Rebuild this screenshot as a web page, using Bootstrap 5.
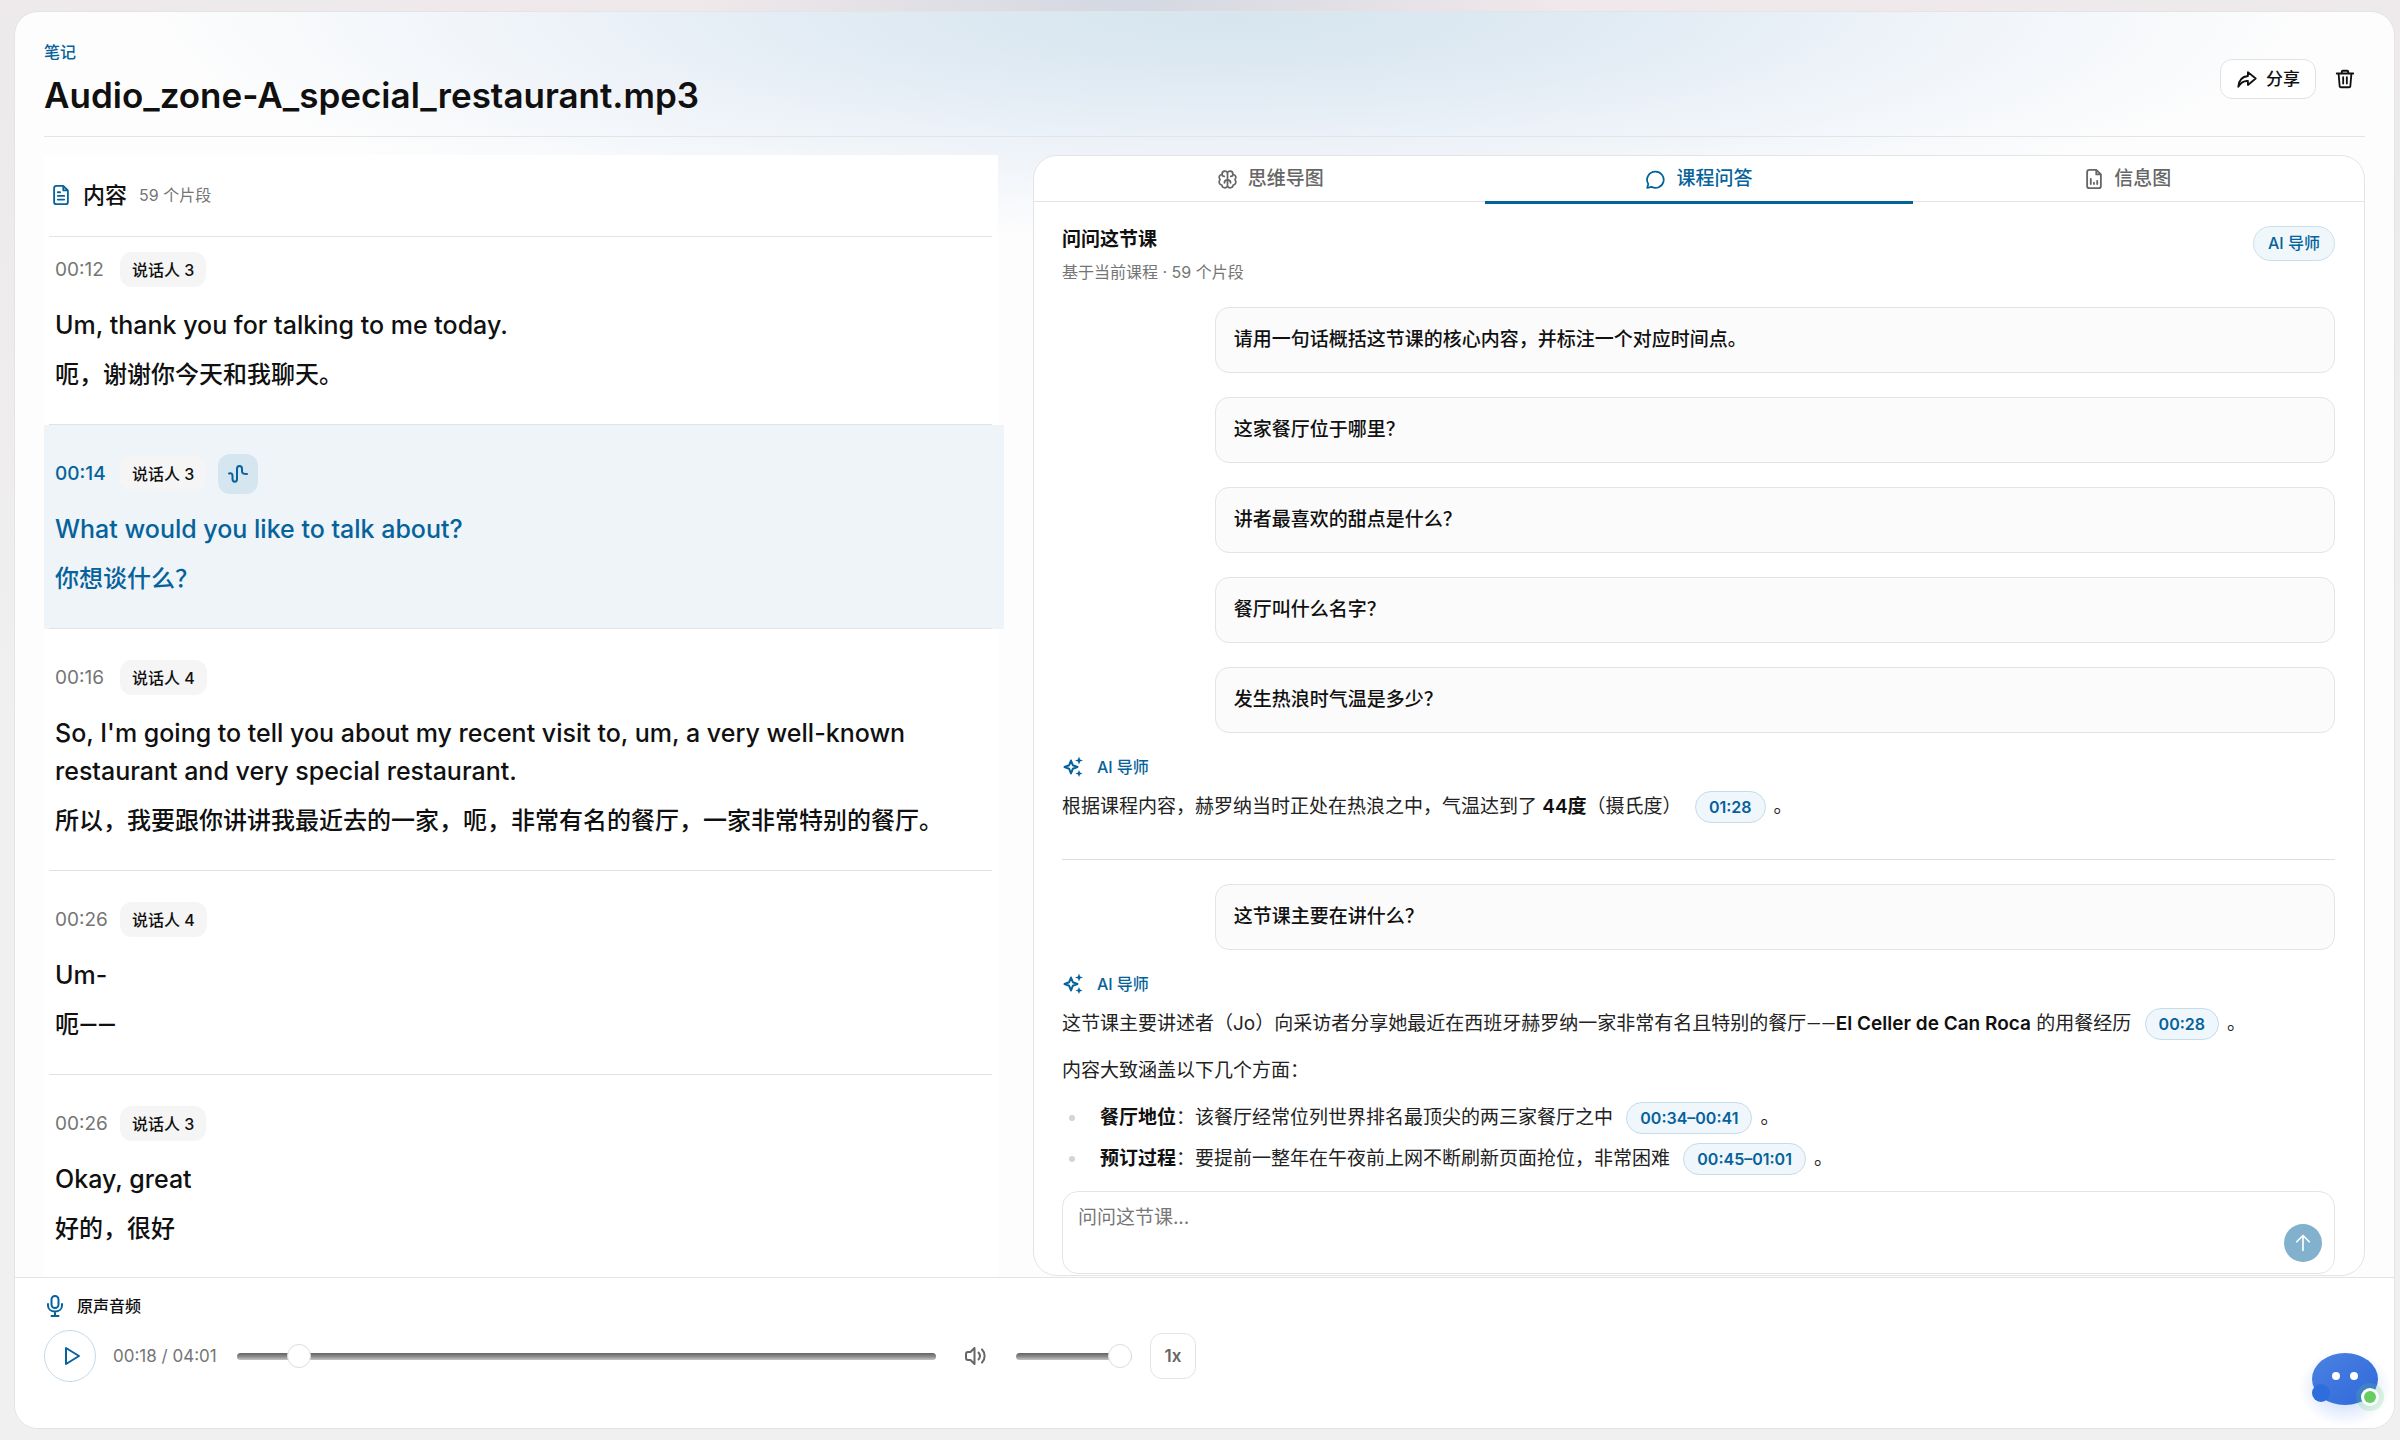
<!DOCTYPE html>
<html lang="zh-CN">
<head>
<meta charset="utf-8">
<meta name="viewport" content="width=device-width, initial-scale=1">
<title>笔记</title>
<link href="https://cdn.jsdelivr.net/npm/bootstrap@5.3.0/dist/css/bootstrap.min.css" rel="stylesheet">
<style>
:root{--brand:#06629b;--ink:#101010;--soft:#757575;--line:#e4e4e4}
body{
  font-family:Inter,"Noto Sans CJK SC",sans-serif;font-size:19px;line-height:32px;color:var(--ink);
  background:
    radial-gradient(ellipse 18% 300px at 47% 0,#d3d8e2,rgba(211,216,226,0) 100%),
    radial-gradient(ellipse 80% 900px at 50% 0,#f1e7ea,rgba(236,230,232,.6) 60%,rgba(240,240,240,0) 100%),
    #f0f0f0;
}
.page{height:100vh;padding:11px 5px 11px 14px}
.shell{border:1px solid var(--line);border-radius:24px;overflow:hidden;
  background:
    radial-gradient(ellipse 28% 130px at 51% 0,rgba(204,226,235,.5),rgba(220,232,240,0) 100%),
    radial-gradient(ellipse 46% 230px at 51% 0,#dfe8f2,#ebf1f8 55%,rgba(253,253,253,0) 100%),
    #fdfdfd}
.shell-head{margin:0 29px;height:125px;border-bottom:1px solid var(--line);padding:10px 5px 0 0}
.crumb{font-size:16px;line-height:24px;font-weight:500;color:var(--brand)}
.page-title{font-size:35px;line-height:46px;font-weight:600;margin:8px 0 0}
.head-actions{gap:14px}
.btn-share{border:1px solid #e2e2e2;border-radius:12px;background:#fff;height:40px;padding:0 15px;font-size:17px;font-weight:500;color:var(--ink)}
.btn-plain{border:0;background:none;padding:0;color:var(--ink);width:30px;height:40px}
.panes{padding:18px 29px 0;gap:28px;min-height:0}

.transcript{flex:0 0 41.4%;overflow:hidden;background:#fff;background-clip:content-box;padding-right:7px}
.transcript-head{margin:0 6px 0 5px;padding:0 0 0 2px;height:82px;border-bottom:1px solid var(--line);gap:12px}
.transcript-head h2{font-size:22px;font-weight:500;line-height:32px;margin:0}
.muted{color:var(--soft);font-size:16px}
.seg{position:relative;padding:29px 11px 31px;}
.seg::after{content:"";position:absolute;left:5px;right:6px;bottom:0;height:1px;background:#dfe3e4}
.seg:last-child::after{display:none}
.seg:first-child{padding-top:13px}
.seg.active{background:#eef4f8;margin-right:-6px;padding-right:17px;color:var(--brand)}
.seg.active::after{right:12px}
.seg-head{height:40px;gap:12px}
.stamp{font-size:19px;color:var(--soft);line-height:32px;min-width:53px}
.active .stamp{color:var(--brand);font-weight:500}
.who{background:#f5f5f5;border-radius:12px;color:var(--ink);font-size:16px;font-weight:500;height:35px;padding:0 12px;display:inline-flex;align-items:center}
.wavebtn{width:40px;height:40px;border:0;border-radius:12px;background:#d5e6f1;color:var(--brand);padding:0}
.seg p{font-weight:500;line-height:38px;margin:16px 0 0}
.seg .en{font-size:25px}
.seg .zh{font-size:24px;margin-top:12px}
.dash{font-family:Roboto,sans-serif}

.assist{border:1px solid var(--line);border-radius:24px;background:#fff;min-width:0;margin-bottom:1px;overflow:hidden}
.assist-tabs{height:46px;border-bottom:1px solid var(--line);padding:0 22px;flex-wrap:nowrap}
.assist-tabs .nav-link{flex:1 1 0;height:48px;padding:2px 0 0;border-bottom:3px solid transparent;border-radius:0;color:#666;font-size:19px;font-weight:500;gap:10px;display:flex;align-items:center;justify-content:center}
.assist-tabs .nav-link.active{color:var(--brand);border-color:var(--brand);background:none}
.assist-body{padding:24px 29px 1px 28px;min-height:0}
.assist-body h3{font-size:19px;line-height:28px;font-weight:600;margin:0 0 6px}
.tutor{border:1px solid #c9dfec;background:#eff7fb;color:var(--brand);border-radius:18px;font-size:16px;font-weight:500;height:35px;padding:0 14px;display:inline-flex;align-items:center}
.chat{margin-top:23px;overflow:hidden;min-height:0;color:#222}
.ask{width:88%;margin:0 0 24px auto;height:66px;border:1px solid var(--line);border-radius:14px;background:#fbfbfb;padding:0 18px;display:flex;align-items:center;font-weight:500;color:var(--ink)}
.byline{font-size:16px;line-height:24px;font-weight:500;color:var(--brand);gap:13px;margin:-2px 0 12px}
.chat p{margin:0 0 15px}
.chat strong{font-weight:600;color:var(--ink)}
.chat hr{margin:36px 0 24px;border-color:#dedede;opacity:1}
.chat ul{list-style:none;padding:0;margin:0}
.chat li{display:flex;align-items:center;margin-bottom:9px}
.chat li::before{content:"";flex:none;width:6px;height:6px;border-radius:50%;background:#d4d4d4;margin:0 25px 0 7px}
.ref{display:inline-flex;align-items:center;height:32px;padding:0 13px;margin:0 8px;border:1px solid #c5dce9;border-radius:16px;background:#f0f7fc;color:var(--brand);font-size:16px;font-weight:600;text-decoration:none;vertical-align:bottom}
.composer{position:relative;margin-top:auto}
.composer textarea{display:block;height:83px;border:1px solid var(--line);border-radius:16px;padding:10px 15px;font-size:19px;line-height:32px;resize:none}
.composer textarea::placeholder{color:#777}
.send{position:absolute;right:13px;bottom:12px;width:38px;height:38px;border:0;border-radius:50%;background:#82b1ce;color:#fff;padding:0}

.player{border-top:1px solid var(--line);background:#fff;padding:16px 29px 46px}
.player-title{font-size:16px;line-height:24px;font-weight:500;gap:14px;padding-left:3px;margin-bottom:12px}
.controls{max-width:1152px}
.play{width:52px;height:52px;border:1px solid #c4dbea;border-radius:50%;background:#fff;color:var(--brand);padding:0 0 0 3px;margin-right:17px}
.time{font-size:17px;color:var(--soft);margin-right:20px;white-space:nowrap}
.track{appearance:none;-webkit-appearance:none;background:none;height:24px;margin:0;min-width:0}
.track::-webkit-slider-runnable-track{height:7px;border-radius:4px;background:linear-gradient(#626262,#8b8b8b 50%,#c4c4c4)}
.track::-webkit-slider-thumb{-webkit-appearance:none;width:24px;height:24px;margin-top:-9px;border-radius:50%;background:#fff;border:1px solid #dcdcdc}
.vol{width:116px;margin-right:18px}
.mute{border:0;background:none;padding:0;color:#666;margin:0 28px;width:24px;height:24px}
.rate{width:46px;height:46px;border:1px solid var(--line);border-radius:12px;background:#fff;color:#666;font-size:17px;font-weight:600;padding:0}
.bot{position:fixed;right:6px;bottom:14px;width:100px;height:100px;border:0;background:none;padding:0}
svg{display:block;flex:none}
.ic{fill:none;stroke:currentColor;stroke-width:2;stroke-linecap:round;stroke-linejoin:round}
.tint{color:var(--brand)}
button{display:inline-flex;align-items:center;justify-content:center}
</style>
</head>
<body>
<div class="page">
<div class="shell d-flex flex-column h-100">
  <header class="shell-head d-flex align-items-center justify-content-between">
    <div>
      <div class="crumb">笔记</div>
      <h1 class="page-title">Audio_zone-A_special_restaurant.mp3</h1>
    </div>
    <div class="head-actions d-flex align-items-center">
      <button type="button" class="btn-share gap-2">
        <svg class="ic" width="22" height="22" viewBox="0 0 24 24"><path d="M13 4.500 21.500 11.500 13 18.500v-4.300C9 13.800 5.500 15.500 2.500 20.500 3 13 7 9.300 13 8.700z"/></svg>
        分享
      </button>
      <button type="button" class="btn-plain" aria-label="删除">
        <svg class="ic" width="22" height="22" viewBox="0 0 24 24"><path d="M3 6h18M5 6l1.200 14c.1.600.6 1 1.200 1h9.200c.6 0 1.100-.4 1.200-1L19 6M8.500 6V4c0-.600.4-1 1-1h5c.6 0 1 .4 1 1v2M10 10v7M14 10v7"/></svg>
      </button>
    </div>
  </header>

  <main class="panes d-flex flex-grow-1">
    <section class="transcript">
      <div class="transcript-head d-flex align-items-center">
        <svg class="ic tint" width="20" height="22" viewBox="0 0 20 24"><path d="M12.500 2H5C3.300 2 2.500 3 2.500 4.500v15C2.500 21 3.300 22 5 22h10c1.700 0 2.500-1 2.500-2.500V7zM12.500 2v5h5M6.500 9h2.500M6.500 13h7M6.500 17h7"/></svg>
        <h2>内容</h2><span class="muted">59 个片段</span>
      </div>
      <div>
        <article class="seg">
          <div class="seg-head d-flex align-items-center"><span class="stamp">00:12</span><span class="who">说话人 3</span></div>
          <p class="en">Um, thank you for talking to me today.</p>
          <p class="zh">呃，谢谢你今天和我聊天。</p>
        </article>
        <article class="seg active">
          <div class="seg-head d-flex align-items-center"><span class="stamp">00:14</span><span class="who">说话人 3</span>
            <button type="button" class="wavebtn" aria-label="正在播放"><svg class="ic" width="20" height="20" viewBox="0 0 20 20"><path d="M1 9.500c2.500-.5 3.500 0 3.500 2.500v3c0 3.500 4.500 3.500 4.500 0V5c0-4 5-4 5 0v2.500c0 2 1.500 2.500 5 2.500"/></svg></button></div>
          <p class="en">What would you like to talk about?</p>
          <p class="zh">你想谈什么？</p>
        </article>
        <article class="seg">
          <div class="seg-head d-flex align-items-center"><span class="stamp">00:16</span><span class="who">说话人 4</span></div>
          <p class="en">So, I'm going to tell you about my recent visit to, um, a very well-known restaurant and very special restaurant.</p>
          <p class="zh">所以，我要跟你讲讲我最近去的一家，呃，非常有名的餐厅，一家非常特别的餐厅。</p>
        </article>
        <article class="seg">
          <div class="seg-head d-flex align-items-center"><span class="stamp">00:26</span><span class="who">说话人 4</span></div>
          <p class="en">Um-</p>
          <p class="zh">呃<span class="dash">——</span></p>
        </article>
        <article class="seg">
          <div class="seg-head d-flex align-items-center"><span class="stamp">00:26</span><span class="who">说话人 3</span></div>
          <p class="en">Okay, great</p>
          <p class="zh">好的，很好</p>
        </article>
      </div>
    </section>

    <section class="assist d-flex flex-column flex-grow-1">
      <nav class="assist-tabs nav">
        <a class="nav-link" href="#map"><svg class="ic" width="21" height="21" viewBox="0 0 24 24"><path d="M12 5.500C12 1 5.500 1.500 5.800 6 2.500 6.500 1.500 10 3.500 12c-2 2.500-1 6 2 6.300C6 22.500 12 22.500 12 18.500zM12 5.500c0-4.500 6.500-4 6.200.5 3.300.5 4.300 4 2.300 6 2 2.500 1 6-2 6.300-.5 4.200-6.500 4.200-6.500.2zM5.800 6c0 1.500 1 2.500 2.500 2.500M18.200 6c0 1.500-1 2.500-2.500 2.500M12 12.500c-2 0-3.500 1.300-3.500 3.300M12 12.500c2 0 3.500 1.300 3.500 3.300"/></svg>思维导图</a>
        <a class="nav-link active" href="#qa"><svg class="ic" width="21" height="21" viewBox="0 0 24 24"><path d="M12 3a9.300 9.300 0 1 1-4.500 17.400L2.500 21.500l1.300-4.300A9.300 9.300 0 0 1 12 3z"/></svg>课程问答</a>
        <a class="nav-link" href="#info"><svg class="ic" width="20" height="22" viewBox="0 0 20 24"><path d="M12.500 2H5C3.300 2 2.500 3 2.500 4.500v15C2.500 21 3.300 22 5 22h10c1.700 0 2.500-1 2.500-2.500V7zM12.500 2v5h5M6.500 12v5.500M10 16v1.500M13.500 14v3.500"/></svg>信息图</a>
      </nav>
      <div class="assist-body d-flex flex-column flex-grow-1">
        <div class="d-flex justify-content-between align-items-start">
          <div>
            <h3>问问这节课</h3>
            <div class="muted lh-base">基于当前课程 · 59 个片段</div>
          </div>
          <span class="tutor">AI 导师</span>
        </div>
        <div class="chat">
          <div class="ask">请用一句话概括这节课的核心内容，并标注一个对应时间点。</div>
          <div class="ask">这家餐厅位于哪里？</div>
          <div class="ask">讲者最喜欢的甜点是什么？</div>
          <div class="ask">餐厅叫什么名字？</div>
          <div class="ask">发生热浪时气温是多少？</div>
          <div class="byline d-flex align-items-center"><svg width="22" height="22" viewBox="0 0 22 22" fill="currentColor"><path fill="none" stroke="currentColor" stroke-width="2" stroke-linejoin="round" d="M9 4.500 10.800 9.200 15.500 11 10.800 12.800 9 17.500 7.200 12.800 2.500 11 7.200 9.200z"/><path d="M17 .5l1.100 2.900L21 4.500l-2.900 1.100L17 8.500l-1.100-2.900L13 4.500l2.900-1.100zM17 14l1 2.500 2.500 1-2.500 1-1 2.500-1-2.500-2.500-1 2.500-1z"/></svg>AI 导师</div>
          <p>根据课程内容，赫罗纳当时正处在热浪之中，气温达到了 <strong>44度</strong>（摄氏度） <a class="ref" href="#t88">01:28</a>。</p>
          <hr>
          <div class="ask">这节课主要在讲什么？</div>
          <div class="byline d-flex align-items-center"><svg width="22" height="22" viewBox="0 0 22 22" fill="currentColor"><path fill="none" stroke="currentColor" stroke-width="2" stroke-linejoin="round" d="M9 4.500 10.800 9.200 15.500 11 10.800 12.800 9 17.500 7.200 12.800 2.500 11 7.200 9.200z"/><path d="M17 .5l1.100 2.900L21 4.500l-2.900 1.100L17 8.500l-1.100-2.900L13 4.500l2.900-1.100zM17 14l1 2.500 2.500 1-2.500 1-1 2.500-1-2.500-2.500-1 2.500-1z"/></svg>AI 导师</div>
          <p>这节课主要讲述者（Jo）向采访者分享她最近在西班牙赫罗纳一家非常有名且特别的餐厅<span class="dash">——</span><strong>El Celler de Can Roca</strong> 的用餐经历 <a class="ref" href="#t28">00:28</a>。</p>
          <p>内容大致涵盖以下几个方面：</p>
          <ul>
            <li><span><strong>餐厅地位</strong>：该餐厅经常位列世界排名最顶尖的两三家餐厅之中 <a class="ref" href="#t34">00:34–00:41</a>。</span></li>
            <li><span><strong>预订过程</strong>：要提前一整年在午夜前上网不断刷新页面抢位，非常困难 <a class="ref" href="#t45">00:45–01:01</a>。</span></li>
          </ul>
        </div>
        <div class="composer">
          <textarea class="form-control" aria-label="问问这节课" placeholder="问问这节课..."></textarea>
          <button type="button" class="send" aria-label="发送"><svg class="ic" width="20" height="20" viewBox="0 0 24 24"><path d="M12 21V3M4.500 10.500 12 3l7.500 7.500"/></svg></button>
        </div>
      </div>
    </section>
  </main>

  <footer class="player">
    <div class="player-title d-flex align-items-center">
      <svg class="ic tint" width="16" height="22" viewBox="0 0 16 22"><rect x="4.500" y="1" width="7" height="12" rx="3.500"/><path d="M1 9v1.500C1 14 4 16.500 8 16.500s7-2.500 7-6V9M8 16.500V21M4.500 21h7"/></svg>
      原声音频
    </div>
    <div class="controls d-flex align-items-center">
      <button type="button" class="play" aria-label="播放"><svg class="ic" width="18" height="20" viewBox="0 0 18 20"><path d="M3 2v16l13-8z"/></svg></button>
      <span class="time">00:18 / 04:01</span>
      <input type="range" class="track flex-grow-1" min="0" max="241" value="18" aria-label="播放进度">
      <button type="button" class="mute" aria-label="静音"><svg class="ic" width="24" height="22" viewBox="0 0 24 22"><path d="M10.500 3 6.500 7H4C2.800 7 2 7.800 2 9v4c0 1.200.8 2 2 2h2.500l4 4zM14.500 7.500c1.700 2 1.700 5 0 7M18 4.500c3.500 3.500 3.500 9.500 0 13"/></svg></button>
      <input type="range" class="track vol" min="0" max="100" value="100" aria-label="音量">
      <button type="button" class="rate">1x</button>
    </div>
  </footer>
</div>
</div>

<button type="button" class="bot" aria-label="助手">
  <svg width="100" height="100" viewBox="0 0 100 100">
    <defs>
      <radialGradient id="glow"><stop offset="0" stop-color="#5b8cf0" stop-opacity=".4"/><stop offset="1" stop-color="#5b8cf0" stop-opacity="0"/></radialGradient>
      <linearGradient id="face" x1="0" y1="0" x2="1" y2="1"><stop offset="0" stop-color="#4c82e2"/><stop offset="1" stop-color="#2f68da"/></linearGradient>
    </defs>
    <ellipse cx="51" cy="62" rx="46" ry="38" fill="url(#glow)"/>
    <ellipse cx="51" cy="53" rx="33" ry="26" fill="url(#face)"/>
    <circle cx="27" cy="67" r="9" fill="#2f6ddd"/>
    <ellipse cx="42" cy="50" rx="4" ry="4" fill="#fff"/><ellipse cx="60" cy="50" rx="4" ry="4" fill="#fff"/>
    <circle cx="76" cy="71" r="14" fill="#5fd068" fill-opacity=".2"/>
    <circle cx="76" cy="71" r="9" fill="#fff"/><circle cx="76" cy="71" r="6" fill="#66cd62"/>
  </svg>
</button>
<script src="https://cdn.jsdelivr.net/npm/bootstrap@5.3.0/dist/js/bootstrap.bundle.min.js"></script>
</body>
</html>
